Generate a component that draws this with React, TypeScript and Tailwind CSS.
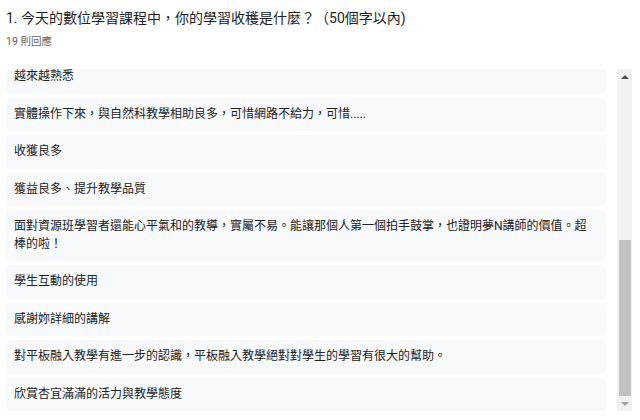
import React from "react";

const answers = [
  "越來越熟悉",
  "實體操作下來，與自然科教學相助良多，可惜網路不給力，可惜.....",
  "收獲良多",
  "獲益良多、提升教學品質",
  "面對資源班學習者還能心平氣和的教導，實屬不易。能讓那個人第一個拍手鼓掌，也證明夢N講師的價值。超棒的啦！",
  "學生互動的使用",
  "感謝妳詳細的講解",
  "對平板融入教學有進一步的認識，平板融入教學絕對對學生的學習有很大的幫助。",
  "欣賞杏宜滿滿的活力與教學態度",
];

export default function App() {
  return (
    <div
      className="w-[640px] h-[420px] bg-white overflow-hidden text-[#202124]"
      style={{ fontFamily: 'Roboto, "Noto Sans CJK TC", "Noto Sans", sans-serif' }}
    >
      <div className="pl-[6px] pt-[8px]">
        <div className="text-[14px] leading-[20px]">1. 今天的數位學習課程中，你的學習收穫是什麼？（50個字以內)</div>
        <div className="mt-[6px] text-[10.5px] leading-[16px] text-[#5f6368]">19 則回應</div>
      </div>
      <div className="mt-[19px] flex h-[342px] pl-[6px]">
        <div className="flex w-[600px] flex-col justify-end gap-[4px] overflow-hidden">
          {answers.map((a, i) => (
            <div
              key={i}
              className="shrink-0 rounded-[4px] bg-[#f8f9fa] px-[8px] py-[8px] text-[12px] leading-[17.5px]"
            >
              {a}
            </div>
          ))}
        </div>
        <div className="ml-[11px] flex w-[15px] flex-col items-center bg-[#f1f1f1]">
          <div className="flex h-[15px] w-full items-center justify-center">
            <div className="h-0 w-0 border-x-[4px] border-b-[4px] border-x-transparent border-b-[#505050]" />
          </div>
          <div className="flex-1" />
          <div className="h-[156px] w-[12px] bg-[#c1c1c1]" />
          <div className="flex h-[15px] w-full items-center justify-center">
            <div className="h-0 w-0 border-x-[4px] border-t-[4px] border-x-transparent border-t-[#a3a3a3]" />
          </div>
        </div>
      </div>
    </div>
  );
}
